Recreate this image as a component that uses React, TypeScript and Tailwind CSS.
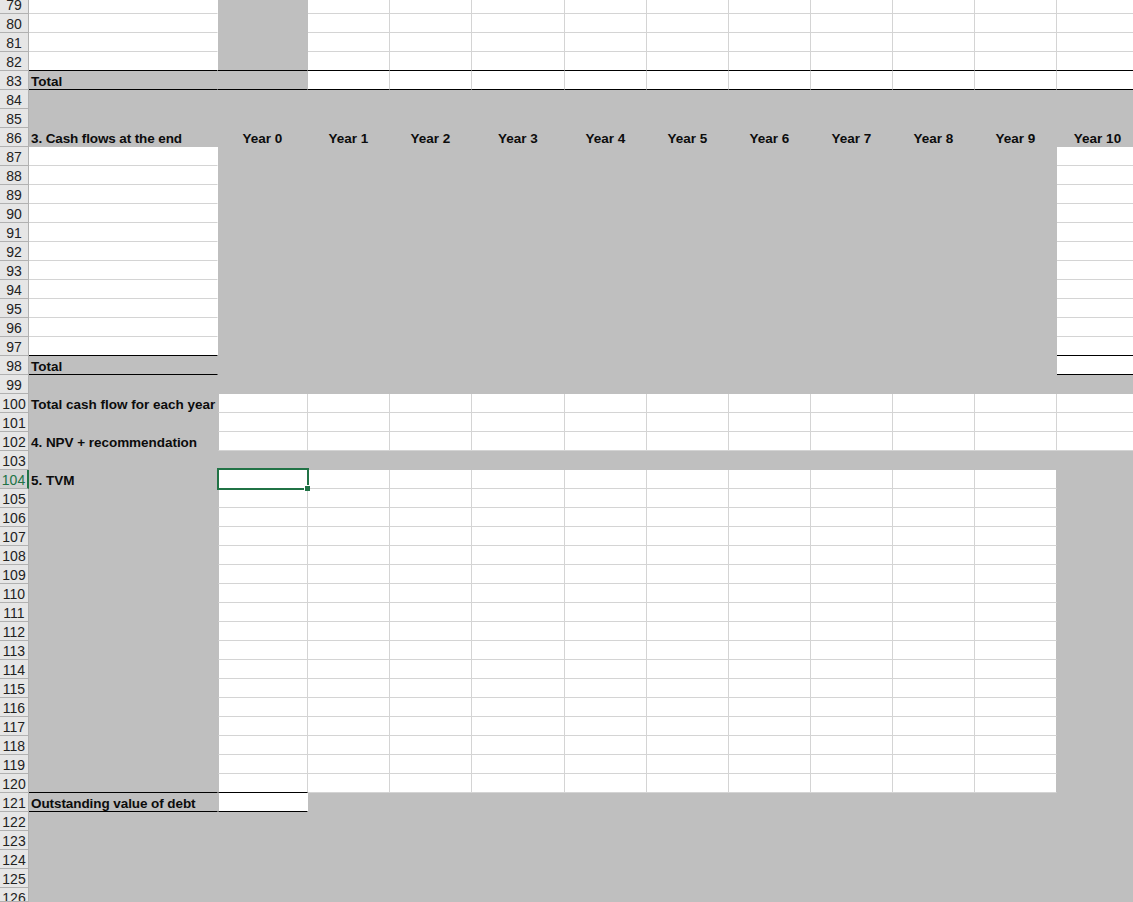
const columnWidths = ["w-[189px]", "w-[90px]", "w-[82px]", "w-[82px]", "w-[93px]", "w-[82px]", "w-[82px]", "w-[82px]", "w-[82px]", "w-[82px]", "w-[82px]", "w-[82px]"];

const years = ["Year 0", "Year 1", "Year 2", "Year 3", "Year 4", "Year 5", "Year 6", "Year 7", "Year 8", "Year 9", "Year 10"];

// which columns of a row are grey (0 = A ... 11 = L)
function isGrey(row: number, col: number) {
  if (row <= 82) return col === 1;
  if (row === 83) return col <= 1;
  if (row >= 84 && row <= 86) return true;
  if (row >= 87 && row <= 98) return row === 98 ? col <= 10 : col >= 1 && col <= 10;
  if (row === 99 || row === 103) return true;
  if (row >= 100 && row <= 102) return col === 0;
  if (row >= 104 && row <= 120) return col === 0 || col === 11;
  if (row === 121) return col !== 1;
  return true;
}

// heavy rule under a cell
function hasBlackBottom(row: number, col: number) {
  if (row === 82 || row === 83) return true;
  if (row === 97 || row === 98) return col === 0 || col === 11;
  if (row === 120 || row === 121) return col <= 1;
  return false;
}

function labelFor(row: number, col: number) {
  if (row === 86) return col === 0 ? "3. Cash flows at the end" : years[col - 1];
  if (col !== 0) return "";
  if (row === 83 || row === 98) return "Total";
  if (row === 100) return "Total cash flow for each year";
  if (row === 102) return "4. NPV + recommendation";
  if (row === 104) return "5. TVM";
  if (row === 121) return "Outstanding value of debt";
  return "";
}

// column A labels run a touch narrower in the original
function labelTracking(row: number, col: number) {
  if (col !== 0) return "";
  if (row === 86) return "tracking-[-0.12px]";
  if (row === 121) return "tracking-[-0.08px]";
  if (row === 102) return "tracking-[-0.04px]";
  return "";
}

function rightBorder(row: number, col: number, grey: boolean) {
  if (grey) return "border-r-[#bfbfbf]";
  // white cells have no rule next to a grey one, except K which turns grey
  if (col === 0) return "border-r-white";
  if (col === 1 && row === 121) return "border-r-white";
  if (col === 10 && isGrey(row, 11)) return "border-r-[#bfbfbf]";
  return "border-r-[#d4d4d4]";
}

function Cell({ row, col }: { row: number; col: number }) {
  const grey = isGrey(row, col);
  const black = hasBlackBottom(row, col);
  const label = labelFor(row, col);
  const greyLeftEdge = col === 1 && !grey && isGrey(row, 0);

  return (
    <div
      className={`relative h-full shrink-0 flex items-center border-b border-r text-[13.5px] font-bold leading-none text-[#0c0c0c] ${columnWidths[col]} ${col === 0 ? "justify-start pl-[2px]" : "justify-center"} ${grey ? "bg-[#bfbfbf]" : "bg-white"} ${black ? "border-b-black" : grey ? "border-b-[#bfbfbf]" : "border-b-[#d4d4d4]"} ${rightBorder(row, col, grey)} ${greyLeftEdge ? "border-l border-l-[#bfbfbf]" : ""}`}
    >
      <span className={`whitespace-nowrap pt-[3px] ${labelTracking(row, col)}`}>{label}</span>
      {row === 104 && col === 1 && (
        <div className="absolute left-[-2px] top-[-2px] z-10 h-[22px] w-[92px] border-2 border-[#217346]">
          <div className="absolute bottom-[-3px] right-[-3px] h-[6px] w-[6px] border-l border-t border-white bg-[#217346]" />
        </div>
      )}
    </div>
  );
}

function Row({ row }: { row: number }) {
  const selected = row === 104;
  const clipped = row === 79 || row === 126;
  return (
    <div className={`flex w-[1138px] ${clipped ? "h-[14px]" : "h-[19px]"}`}>
      <div
        className={`flex w-[29px] shrink-0 justify-center overflow-hidden border-b border-r border-b-[#b1b1b1] text-[14px] ${row === 79 ? "items-end leading-[16px]" : "items-start leading-[20px]"} ${selected ? "border-r-2 border-r-[#217346] bg-[#d2d2d2] text-[#217346]" : "border-r-[#b1b1b1] bg-[#e6e6e6] text-[#222222]"}`}
      >
        {row}
      </div>
      {columnWidths.map((_, col) => (
        <Cell key={col} row={row} col={col} />
      ))}
    </div>
  );
}

export default function App() {
  const rows = Array.from({ length: 48 }, (_, i) => 79 + i);
  return (
    <div className="h-[902px] w-[1133px] overflow-hidden bg-white font-['Liberation_Sans',Arial,sans-serif]">
      {rows.map((row) => (
        <Row key={row} row={row} />
      ))}
    </div>
  );
}
